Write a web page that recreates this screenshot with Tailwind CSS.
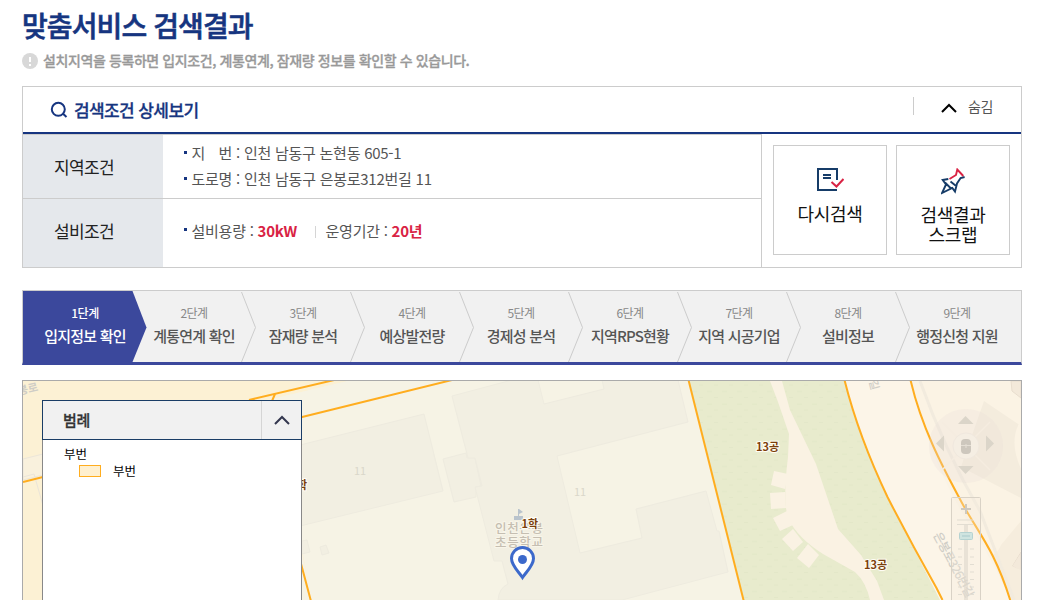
<!DOCTYPE html>
<html lang="ko">
<head>
  <meta charset="UTF-8" />
  <meta name="viewport" content="width=device-width, initial-scale=1.0"/>
  <title>맞춤서비스 검색결과</title>
  <script src="https://cdn.jsdelivr.net/npm/@tailwindcss/browser@4"></script>
</head>
<body class="bg-white h-[600px] overflow-hidden font-['Noto_Sans_CJK_KR',sans-serif] text-[#555]">
<div class="ml-[22px] w-[1000px]">

<!-- Title -->
<header class="h-[86px]">
  <h1 class="pt-[5px] h-[46px] text-[28px] leading-[40px] font-medium tracking-[-0.9px] text-[#163580] whitespace-nowrap [-webkit-text-stroke:0.6px]">맞춤서비스 검색결과</h1>
  <p class="flex items-center h-[31px] -mt-[1px] pb-[1px] text-[14px] leading-[20px] font-medium tracking-[-0.4px] text-[#999] whitespace-nowrap [-webkit-text-stroke:0.3px]">
    <svg class="w-4 h-4 mr-[5px] mt-px" viewBox="0 0 16 16"><circle cx="8" cy="8" r="8" fill="#d8d8d8"/><path d="M7 4h2v5H7zM7 11h2v2H7z" fill="#fff"/></svg>
    설치지역을 등록하면 입지조건, 계통연계, 잠재량 정보를 확인할 수 있습니다.
  </p>
</header>

<!-- Search conditions -->
<section class="h-[182px] border border-[#ccc]">
  <div class="h-[47px] border-b-2 border-[#163580] flex items-center justify-between pl-[27px] pr-[28px]">
    <h2 class="flex items-center text-[17px] leading-6 font-medium tracking-[-0.6px] text-[#163580] [-webkit-text-stroke:0.3px]">
      <svg class="w-[18px] h-[18px] mr-[6px]" viewBox="0 0 18 18" fill="none" stroke="#163580" stroke-width="2"><circle cx="8.300" cy="8.300" r="6.500"/><path d="M12.800 12.600l3.700 3.400"/></svg>
      <span>검색조건 상세보기</span>
    </h2>
    <button class="flex items-center h-[18px] -mt-[8px] border-l border-[#ccc] pl-[27px] text-[14px] leading-[18px] tracking-[-0.4px] text-[#555]">
      <svg class="w-4 h-[10px] mt-[5px] mr-[11px]" viewBox="0 0 16 10" fill="none" stroke="#000" stroke-width="2"><path d="M1 9l7-7 7 7"/></svg>
      숨김
    </button>
  </div>
  <div class="flex h-[133px]">
    <dl class="w-[739px] grid grid-cols-[140px_1fr] grid-rows-[64px_68px] border-t border-r border-[#ccc]">
      <dt class="bg-[#e5e8ec] border-b border-[#ccc] pl-[31px] leading-[64px] text-[17px] tracking-[-0.6px] text-[#222]">지역조건</dt>
      <dd class="border-b border-[#ccc] pl-[21px] pt-[5px] leading-[26px] text-[15px] tracking-[-0.25px]">
        <p class="flex items-center"><i class="w-[3px] h-[3px] bg-[#163580] mr-[4.500px] mb-px"></i><span class="w-[27px]">지</span>번 : 인천 남동구 논현동 605-1</p>
        <p class="flex items-center"><i class="w-[3px] h-[3px] bg-[#163580] mr-[4.500px] mb-px"></i>도로명 : 인천 남동구 은봉로312번길 11</p>
      </dd>
      <dt class="bg-[#e5e8ec] pl-[31px] leading-[64px] text-[17px] tracking-[-0.6px] text-[#222]">설비조건</dt>
      <dd class="pl-[21px] flex items-center h-[65px] text-[15px] tracking-[-0.25px]">
        <i class="w-[3px] h-[3px] bg-[#163580] mr-[4.500px] mb-1"></i>설비용량 :&nbsp;<b class="text-[#d92344]">30kW</b>
        <i class="w-px h-3 bg-[#d5d5d5] ml-[18px] mr-[9.500px]"></i>운영기간 :&nbsp;<b class="text-[#d92344]">20년</b>
      </dd>
    </dl>
    <div class="flex gap-[9px] pl-[11px] pt-[11px] text-[18px] leading-5 tracking-[-0.3px] text-[#111] text-center">
      <button class="w-[114px] h-[110px] border border-[#ccc] flex flex-col items-center pt-[20px]">
        <svg class="w-7 h-[26px] mb-[11px]" viewBox="0 0 28 26" fill="none" stroke="#163c68" stroke-width="2"><path d="M21 14V3H2v21h19M7 9h8M7 12h8"/><path d="M15.500 16l5 4.500 7-7.500" stroke="#d92344"/></svg>
        다시검색
      </button>
      <button class="w-[114px] h-[110px] border border-[#ccc] flex flex-col items-center pt-[22px]">
        <svg class="w-6 h-[27px] mb-[9px]" viewBox="0 0 24 27" fill="none" stroke="#163c68" stroke-width="1.900"><path d="M7.300 11L1.700 12l3.300 4.500L1 25l10.300-5 2.700 3.500 2-8 3.600-5.500 4-1M4 14.500l6 6M9.500 13.500l5 4"/><path d="M8.500 11l6.500-4 1.300-5.500 6 6.500" stroke="#d92344"/></svg>
        <span>검색결과<br>스크랩</span>
      </button>
    </div>
  </div>
</section>

<!-- Steps -->
<nav class="relative mt-[22px] h-[75px] border border-b-[3px] border-[#ccc] border-b-[#3b489c] bg-[#f1f1f1]">
  <svg class="absolute left-0 top-0 w-[998px] h-[71px]" viewBox="0 0 998 71" fill="none" stroke="#ccc">
    <path d="M0 0h109.500l14 36.500L109.500 71H0z" fill="#3b489c" stroke="none"/>
    <path d="M218.500 1l14 35.500-14 34.500M327.500 1l14 35.500-14 34.500M436.500 1l14 35.500-14 34.500M545.500 1l14 35.500-14 34.500M654.500 1l14 35.500-14 34.500M763.500 1l14 35.500-14 34.500M872.500 1l14 35.500-14 34.500"/>
  </svg>
  <ol class="relative flex pl-[7.500px] pt-[11px] text-center text-[15px] leading-[25px] font-medium tracking-[-0.8px] whitespace-nowrap [&_small]:block [&_small]:text-[12px] [&_small]:leading-[21px] [&_small]:tracking-[-0.5px]">
    <li class="w-[109px] shrink-0 text-white"><small class="font-medium">1단계</small>입지정보 확인</li>
    <li class="w-[109px] shrink-0"><small class="font-normal text-[#888]">2단계</small>계통연계 확인</li>
    <li class="w-[109px] shrink-0"><small class="font-normal text-[#888]">3단계</small>잠재량 분석</li>
    <li class="w-[109px] shrink-0"><small class="font-normal text-[#888]">4단계</small>예상발전량</li>
    <li class="w-[109px] shrink-0"><small class="font-normal text-[#888]">5단계</small>경제성 분석</li>
    <li class="w-[109px] shrink-0"><small class="font-normal text-[#888]">6단계</small>지역RPS현황</li>
    <li class="w-[109px] shrink-0"><small class="font-normal text-[#888]">7단계</small>지역 시공기업</li>
    <li class="w-[109px] shrink-0"><small class="font-normal text-[#888]">8단계</small>설비정보</li>
    <li class="w-[109px] shrink-0"><small class="font-normal text-[#888]">9단계</small>행정신청 지원</li>
  </ol>
</nav>

<!-- Map -->
<main class="relative mt-[15px] h-[220px] border border-b-0 border-[#aaa] overflow-hidden">
  <svg class="block w-[998px] h-[219px]" viewBox="23 381 998 219">
    <defs>
      <pattern id="grass" width="15" height="12.500" patternUnits="userSpaceOnUse"><path d="M2 4h5M9 10h4" stroke="#e2e7c8" stroke-width="1"/></pattern>
    </defs>
    <rect x="23" y="381" width="998" height="219" fill="#f6f3e5"/>
    <path d="M23 381H348L272 399 312 600H23z" fill="#fcf1d4"/>
    <path d="M272 399l76-18h97L290 420z" fill="#f6f3e5"/>
    <path d="M23 459l20-5v21l-20 5z" fill="#f9f1dd" stroke="#ebe5d9"/>
    <path d="M23 477l11-3 10 35" fill="none" stroke="#ebe5d9"/>
    <path d="M302 400V600l11 0-11-46z" fill="#f6f3e5"/>
    <!-- school buildings -->
    <g fill="#f2efe2" stroke="#eeebdf">
      <path d="M300 445l124-31 19 77-143 35z"/>
      <path d="M443 459l23-6 1 5h8l6 28-5 1v10l-22 5z"/>
      <path d="M452 396l60-16h26l6 24 60-15-2-9h76l10 42-131 34 23 97 62-15-6-29 70-18 11 40h2l9 41-106 28H498q1-12 10-16l-6-23h-8l-19-74 7-1-7-28h-7z"/>
      <path d="M302 541l5-1 3 12-8 2zM320 547l6-2 3 8-7 2z"/>
    </g>
    <!-- park -->
    <path d="M689 381h156q14 57 43 118 28 52 53 101H744z" fill="#e8ebcd"/>
    <path d="M689 381h156q14 57 43 118 28 52 53 101H744z" fill="url(#grass)"/>
    <path d="M770 381h12l8 29 26 54 22 65 23 26 16 26 7 19h-14q-4-18-15-28l-32-18q-25-16-34-34-7-15-1-63l1-23-11-32z" fill="#faf2e3"/>
    <g fill="#faf2e3"><path d="M774 471l14 3-3 15-14-4z"/><path d="M770 493l15-1 1 16-15 1z"/><path d="M773 518l14-7 6 14-13 6z"/><path d="M782 539l11-10 10 13-10 9z"/><path d="M797 558l11-14 11 11-10 13z"/></g>
    <!-- roads on the east side -->
    <path d="M845 381h66q18 76 54 136 30 46 46 83h-71q-35-69-52-101-33-71-43-118z" fill="#fcf5e8"/>
    <path d="M911 381h110v219h-10q-13-32-46-83-35-59-54-136z" fill="#fbf3e4"/>
    <path d="M984 401l37 25v72l-60-31z" fill="#f4ecdd"/>
    <path d="M1021 420q-13 20 0 49z" fill="#fbf3e4"/>
    <path d="M1011 381h10v17l-9-7zM1021 552l-9 14 9 5z" fill="#f3e9da" stroke="#e8ddce"/>
    <path d="M984 538q8 28 17 7l20-24v30l-9 15 9 4v30h-11z" fill="#f6eddd"/>
    <path d="M920 381q25 70 60 130l34 89" fill="none" stroke="#f2ebde" stroke-width="3"/>
    <g fill="none" stroke="#ffad1f" stroke-width="2">
      <path d="M23 482l20-5M249 400l98-23M275 394l-3 7M290 420l162-40M300 560l12 45M688.500 380L744 602"/>
      <path d="M844.500 380q14 56 43 117 23 45 49 91l6 12M910.500 380c11 47 31 85 51 122 16 30 33 47 49 99"/>
    </g>
    <!-- pan control -->
    <g>
      <circle cx="966" cy="446" r="37" fill="#e6ddd6" fill-opacity=".25"/>
      <path d="M942 422l48 48M990 422l-48 48" stroke="#f5ece0" stroke-width="1.500"/>
      <circle cx="966" cy="446" r="13" fill="#f5eee3" stroke="#f0e8de"/>
      <path d="M965.500 416l8 8h-15.500zM965.500 474l8-8h-15.500zM936 443.500l8-8v16zM994 443.500l-8-8v16z" fill="#dbd5c9"/>
      <rect x="961" y="439" width="10" height="15" rx="4" fill="#cdc7bd"/><path d="M961 445.500h10M966 444v4" stroke="#e5dfd5"/>
    </g>
    <g font-family="'Noto Sans CJK KR', sans-serif" fill="#cfcdc6">
      <text x="19" y="395" font-size="11" font-weight="700" transform="rotate(-13 19 395)">봉로</text>
      <text x="869" y="381" font-size="11" font-weight="500" transform="rotate(75 869 381)">길</text>
      <text x="933" y="535" font-size="12" font-weight="500" transform="rotate(62 933 535)" textLength="72">은봉로326번길</text>
      <text x="354" y="475" font-size="11" fill="#dad7ca">11</text><text x="574" y="496" font-size="11" fill="#dad7ca">11</text>
    </g>
    <!-- zoom slider -->
    <g>
      <rect x="951.500" y="497.500" width="29" height="110" rx="1" fill="#f4ecdf" fill-opacity=".3" stroke="#d9d2c6"/>
      <path d="M966 504v10M961 509h10" stroke="#cec8be" stroke-width="2"/>
      <path d="M957 520h16M957 524.500h16M958 549h4M970 549h4M958 557h4M970 557h4M958 564.500h4M970 564.500h4M958 572h4M970 572h4M958 579.500h4M970 579.500h4M958 587h4M970 587h4M958 594.500h4M970 594.500h4" stroke="#e2ddd2"/>
      <path d="M966 525v80" stroke="#ddd7cb" stroke-opacity=".6" stroke-width="4"/>
      <rect x="959.500" y="532.500" width="13" height="7" rx="1" fill="#cfe4e0" stroke="#b5d2d1"/><path d="M962 536h8" stroke="#a8c9cb"/>
    </g>
    <!-- school marker -->
    <path d="M514 516h4v-7h1l4 3-4 2v2h4v4h-9z" fill="#b9c3cc"/>
    <g font-family="'Noto Sans CJK KR', sans-serif" font-size="12.500" font-weight="500" fill="#c5beb1" stroke="#f8f5e9" stroke-width="2" paint-order="stroke">
      <text x="495" y="533" textLength="48">인천은봉</text><text x="495" y="547" textLength="48">초등학교</text>
    </g>
    <g font-family="'Noto Sans CJK KR', sans-serif" font-size="11" font-weight="700" fill="#7b3f0c" stroke="#fffdf5" stroke-width="2" paint-order="stroke">
      <text x="521.500" y="528">1학</text><text x="756" y="451">13공</text><text x="864" y="569">13공</text><text x="297" y="489">학</text>
    </g>
    <path d="M522.500 577.500c-4-6-11-12-11-19a11 11 0 0 1 22 0c0 7-7 13-11 19z" fill="#fff" stroke="#3c69cb" stroke-width="3"/>
    <circle cx="522.500" cy="559.500" r="4.500" fill="#3c69cb"/>
  </svg>

  <!-- Legend panel, floats over the map -->
  <aside class="absolute left-[19px] top-[19px] w-[260px] h-[260px] bg-white border border-[#888] text-black">
    <div class="-mx-px -mt-px h-10 flex border border-[#1a3d66] bg-[#f1f1f1]">
      <h3 class="grow pl-5 text-[15px] leading-[38px] font-medium tracking-[-0.2px] text-[#333] [-webkit-text-stroke:0.3px]">범례</h3>
      <button class="w-10 border-l border-[#d5d5d5] flex items-center justify-center">
        <svg class="w-4 h-[10px]" viewBox="0 0 16 10" fill="none" stroke="#34374f" stroke-width="2"><path d="M1 9l7-7 7 7"/></svg>
      </button>
    </div>
    <div class="pl-[21px] pt-[5px] text-[12.500px] leading-[17px]">
      <p>부번</p>
      <p class="flex items-center pl-[15px]"><i class="w-[22px] h-3 border border-[#ffad1f] bg-[#fff0cf] mr-3"></i>부번</p>
    </div>
  </aside>
</main>

</div>
</body>
</html>
